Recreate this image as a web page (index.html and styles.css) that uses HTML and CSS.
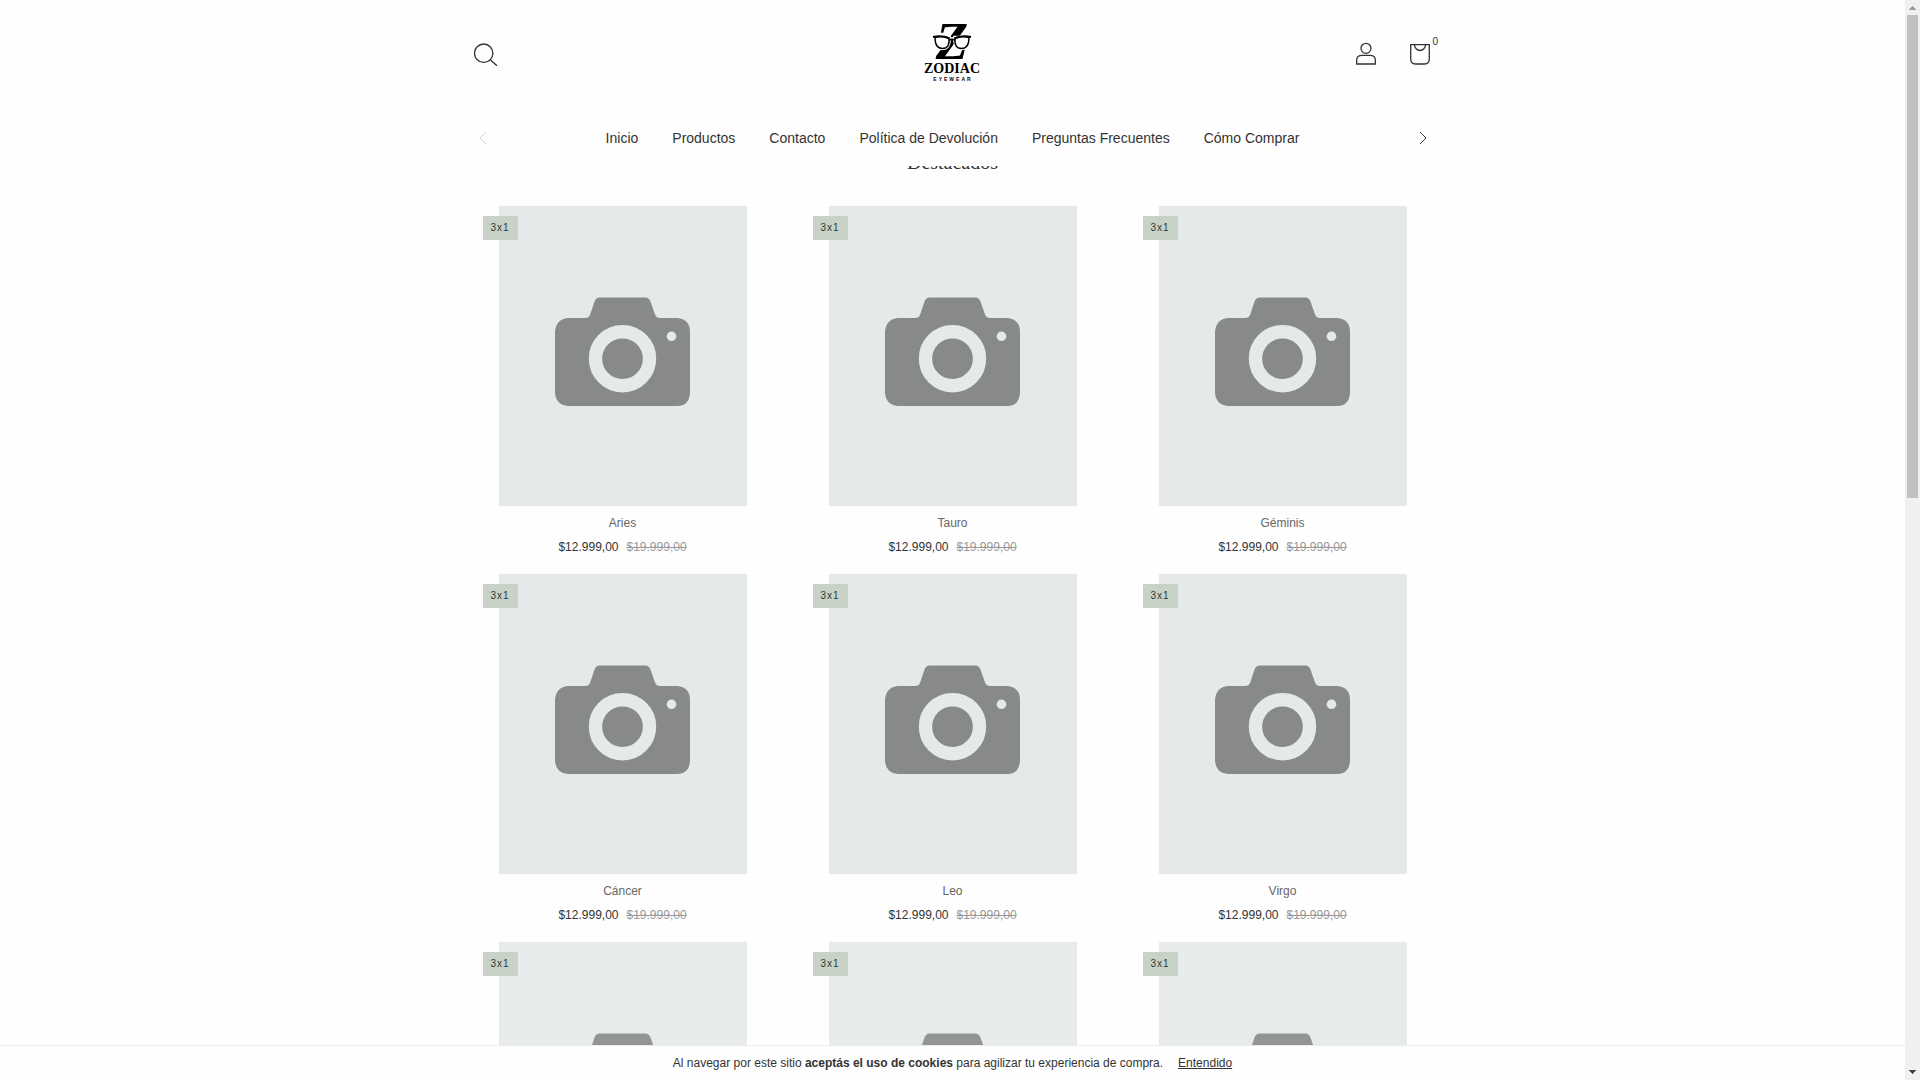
FILE: index.html
```html
<!DOCTYPE html>
<html lang="es">
<head>
<meta charset="utf-8">
<meta name="viewport" content="width=device-width, initial-scale=1">
<title>Zodiac Eyewear</title>
<link rel="stylesheet" href="styles.css">
</head>
<body>
<svg width="0" height="0" class="sprite" aria-hidden="true">
  <symbol id="camera" viewBox="0 0 248 300">
    <path fill="#888a89" d="M69 112H86Q90 112 91.200 108.500L95 97Q96.500 91.600 101 91.600H146Q150.500 91.600 152 97L156 108.500Q157.500 112 161 112H178Q191 113 191 126V187Q190 200 178 200H69Q57 199 56 187V126Q57 113 69 112Z"/>
    <circle cx="123.500" cy="152.700" r="27" fill="none" stroke="#e5e9e9" stroke-width="13.400"/>
    <circle cx="172.500" cy="130.300" r="4.800" fill="#e5e9e9"/>
  </symbol>
</svg>
<div class="window">
  <div class="page">
    <header class="header">
      <div class="topbar">
        <div class="tools">
          <button class="icon-button" aria-label="Buscar">
            <svg width="24" height="24" viewBox="0 0 24 24"><circle cx="9.700" cy="11.200" r="9.200"/><path d="M16.500 18 23 23.800"/></svg>
          </button>
        </div>
        <a href="#" class="logo" aria-label="Zodiac Eyewear">
          <svg width="64" height="64" viewBox="0 0 64 64">
            <text class="logo-mark" x="31" y="37" text-anchor="middle">Z</text>
            <g fill="#fff" stroke="#fff" stroke-width="2.600"><path d="M13.500 15H28.500V19.500Q28 27 21 27T13.500 18.500ZM33.500 15H48.500V18.500Q48 27 41 27T33.500 19.500ZM28 18Q31 15 34 18"/></g>
            <g fill="#fff" stroke="#000" stroke-width="1.400"><path d="M14 15.500Q21 13.500 28 16Q29 26.500 21.500 26.500Q14 26.500 14 15.500ZM48 15.500Q41 13.500 34 16Q33 26.500 40.500 26.500Q48 26.500 48 15.500Z"/><path fill="none" d="M28 18.500Q31 16 34 18.500"/></g>
            <path stroke="#000" stroke-width="2" fill="none" d="M12 15Q21 13 28.500 16.500M50 15Q41 13 33.500 16.500"/>
            <text class="logo-name" x="31" y="51" text-anchor="middle">ZODIAC</text>
            <text class="logo-sub" x="32" y="59" text-anchor="middle">EYEWEAR</text>
          </svg>
        </a>
        <div class="tools tools-end">
          <button class="icon-button" aria-label="Mi cuenta">
            <svg width="24" height="24" viewBox="0 0 24 24"><circle cx="12" cy="6.300" r="5"/><path d="M2.700 22V17.500Q3 13.300 8 13.300H16Q21 13.300 21.300 17.500V22Z"/></svg>
          </button>
          <button class="icon-button" aria-label="Carrito, 0 productos">
            <svg width="24" height="24" viewBox="0 0 24 24"><path d="M2.700 2.700H21.300V17Q21.300 22 16.500 22H7.500Q2.700 22 2.700 17ZM6.500 2.700A5.500 5.800 0 0 0 17.500 2.700"/></svg>
            <span class="count">0</span>
          </button>
        </div>
      </div>
      <nav class="nav">
        <button class="arrow" disabled aria-label="Anterior"><svg width="8" height="14" viewBox="0 0 8 14"><path d="M7 1 1 7 7 13"/></svg></button>
        <div class="links">
          <a href="#">Inicio</a>
          <a href="#">Productos</a>
          <a href="#">Contacto</a>
          <a href="#">Política de Devolución</a>
          <a href="#">Preguntas Frecuentes</a>
          <a href="#">Cómo Comprar</a>
        </div>
        <button class="arrow" aria-label="Siguiente"><svg width="8" height="14" viewBox="0 0 8 14"><path d="M1 1 7 7 1 13"/></svg></button>
      </nav>
    </header>
    <main class="main">
      <h2 class="title">Destacados</h2>
      <div class="products">
        <article class="card">
          <div class="photo"><svg class="placeholder"><use href="#camera"/></svg></div><span class="label">3x1</span>
          <a href="#" class="name">Aries</a>
          <p class="prices"><span>$12.999,00</span><s>$19.999,00</s></p>
        </article>
        <article class="card">
          <div class="photo"><svg class="placeholder"><use href="#camera"/></svg></div><span class="label">3x1</span>
          <a href="#" class="name">Tauro</a>
          <p class="prices"><span>$12.999,00</span><s>$19.999,00</s></p>
        </article>
        <article class="card">
          <div class="photo"><svg class="placeholder"><use href="#camera"/></svg></div><span class="label">3x1</span>
          <a href="#" class="name">Géminis</a>
          <p class="prices"><span>$12.999,00</span><s>$19.999,00</s></p>
        </article>
        <article class="card">
          <div class="photo"><svg class="placeholder"><use href="#camera"/></svg></div><span class="label">3x1</span>
          <a href="#" class="name">Cáncer</a>
          <p class="prices"><span>$12.999,00</span><s>$19.999,00</s></p>
        </article>
        <article class="card">
          <div class="photo"><svg class="placeholder"><use href="#camera"/></svg></div><span class="label">3x1</span>
          <a href="#" class="name">Leo</a>
          <p class="prices"><span>$12.999,00</span><s>$19.999,00</s></p>
        </article>
        <article class="card">
          <div class="photo"><svg class="placeholder"><use href="#camera"/></svg></div><span class="label">3x1</span>
          <a href="#" class="name">Virgo</a>
          <p class="prices"><span>$12.999,00</span><s>$19.999,00</s></p>
        </article>
        <article class="card">
          <div class="photo fading"><svg class="placeholder"><use href="#camera"/></svg></div><span class="label">3x1</span>
        </article>
        <article class="card">
          <div class="photo fading"><svg class="placeholder"><use href="#camera"/></svg></div><span class="label">3x1</span>
        </article>
        <article class="card">
          <div class="photo fading"><svg class="placeholder"><use href="#camera"/></svg></div><span class="label">3x1</span>
        </article>
      </div>
    </main>
    <div class="cookies">
      <p>Al navegar por este sitio <strong>aceptás el uso de cookies</strong> para agilizar tu experiencia de compra.</p>
      <a href="#">Entendido</a>
    </div>
  </div>
  <div class="scrollbar" aria-hidden="true">
    <svg class="up" width="7" height="4" viewBox="0 0 7 4"><path d="M0 4V3H1V2H2V1H3V0H4V1H5V2H6V3H7V4Z"/></svg>
    <div class="track"><div class="thumb"></div></div>
    <svg class="down" width="7" height="4" viewBox="0 0 7 4"><path d="M0 0V1H1V2H2V3H3V4H4V3H5V2H6V1H7V0Z"/></svg>
  </div>
</div>
</body>
</html>
```

FILE: styles.css
```css
* { box-sizing: border-box; }
body {
  margin: 0;
  background: #fefefe;
  color: #333;
  font-family: "Liberation Sans", Arial, sans-serif;
  font-size: 12px;
  line-height: 18px;
}
a { color: inherit; text-decoration: none; }
p { margin: 0; }
button { padding: 0; border: 0; background: none; color: inherit; font: inherit; }
svg { display: block; }
.sprite { position: absolute; }

.window { display: grid; grid-template-columns: minmax(0, 1fr) 15px; height: 100vh; overflow: hidden; }
.page { display: flex; flex-direction: column; height: 100vh; }

/* Header */
.header { padding-bottom: 16px; }
.topbar, .nav {
  display: grid;
  align-items: center;
  max-width: 990px;
  margin: 0 auto;
}
.topbar { grid-template-columns: 1fr auto 1fr; height: 108px; padding: 0 16px; }
.tools { display: flex; gap: 30px; }
.tools-end { justify-content: flex-end; }
.icon-button { position: relative; }
.icon-button svg, .arrow svg { fill: none; stroke: #333; stroke-width: 1.3; }
.count { position: absolute; left: 25px; top: -8px; font-size: 10px; line-height: 16px; }
.logo-mark { font: italic bold 53px "Liberation Serif", serif; }
.logo-name { font: bold 14px "Liberation Serif", serif; }
.logo-sub { font: bold 5px "Liberation Sans", sans-serif; letter-spacing: 2px; }
.nav { grid-template-columns: 8px 1fr 8px; height: 60px; padding: 0 21px; margin-bottom: -18px; }
.arrow svg { stroke-width: 1; }
.arrow:disabled { opacity: .2; }
.links { display: flex; justify-content: center; gap: 34px; font-size: 14px; white-space: nowrap; }

/* Featured products */
.main { flex: 1; min-height: 0; overflow: hidden; }
.title {
  margin: -16px 0 32px;
  font: 20px/24px "Liberation Serif", serif;
  text-align: center;
}
.products { display: grid; grid-template-columns: repeat(3, 1fr); max-width: 990px; margin: 0 auto; }
.card {
  position: relative;
  display: flex;
  flex-direction: column;
  align-items: center;
  padding-bottom: 18px;
}
.photo { width: 248px; height: 300px; margin-bottom: 8px; background: #e5e9e9; }
.placeholder { width: 100%; height: 100%; }
.fading { opacity: .9; }
.label {
  position: absolute;
  top: 10px;
  left: 25px;
  padding: 0 8px;
  background: #c9d2c7;
  font-size: 10px;
  line-height: 24px;
  letter-spacing: 1px;
}
.name { color: #666; margin-bottom: 6px; }
.prices { display: flex; gap: 8px; }
.prices s { color: #999; }

/* Cookie notice */
.cookies {
  display: flex;
  justify-content: center;
  gap: 15px;
  padding: 8px;
  border-top: 1px solid #ececec;
}
.cookies a { text-decoration: underline; }

/* Scroll bar */
.scrollbar { display: flex; flex-direction: column; align-items: center; padding: 6px 2px; background: #f0f0f0; }
.track { flex: 1; width: 11px; margin: 5px 0; }
.thumb { height: 46%; background: #c0c0c0; }
.up { fill: #999; }
.down { fill: #444; }
```
